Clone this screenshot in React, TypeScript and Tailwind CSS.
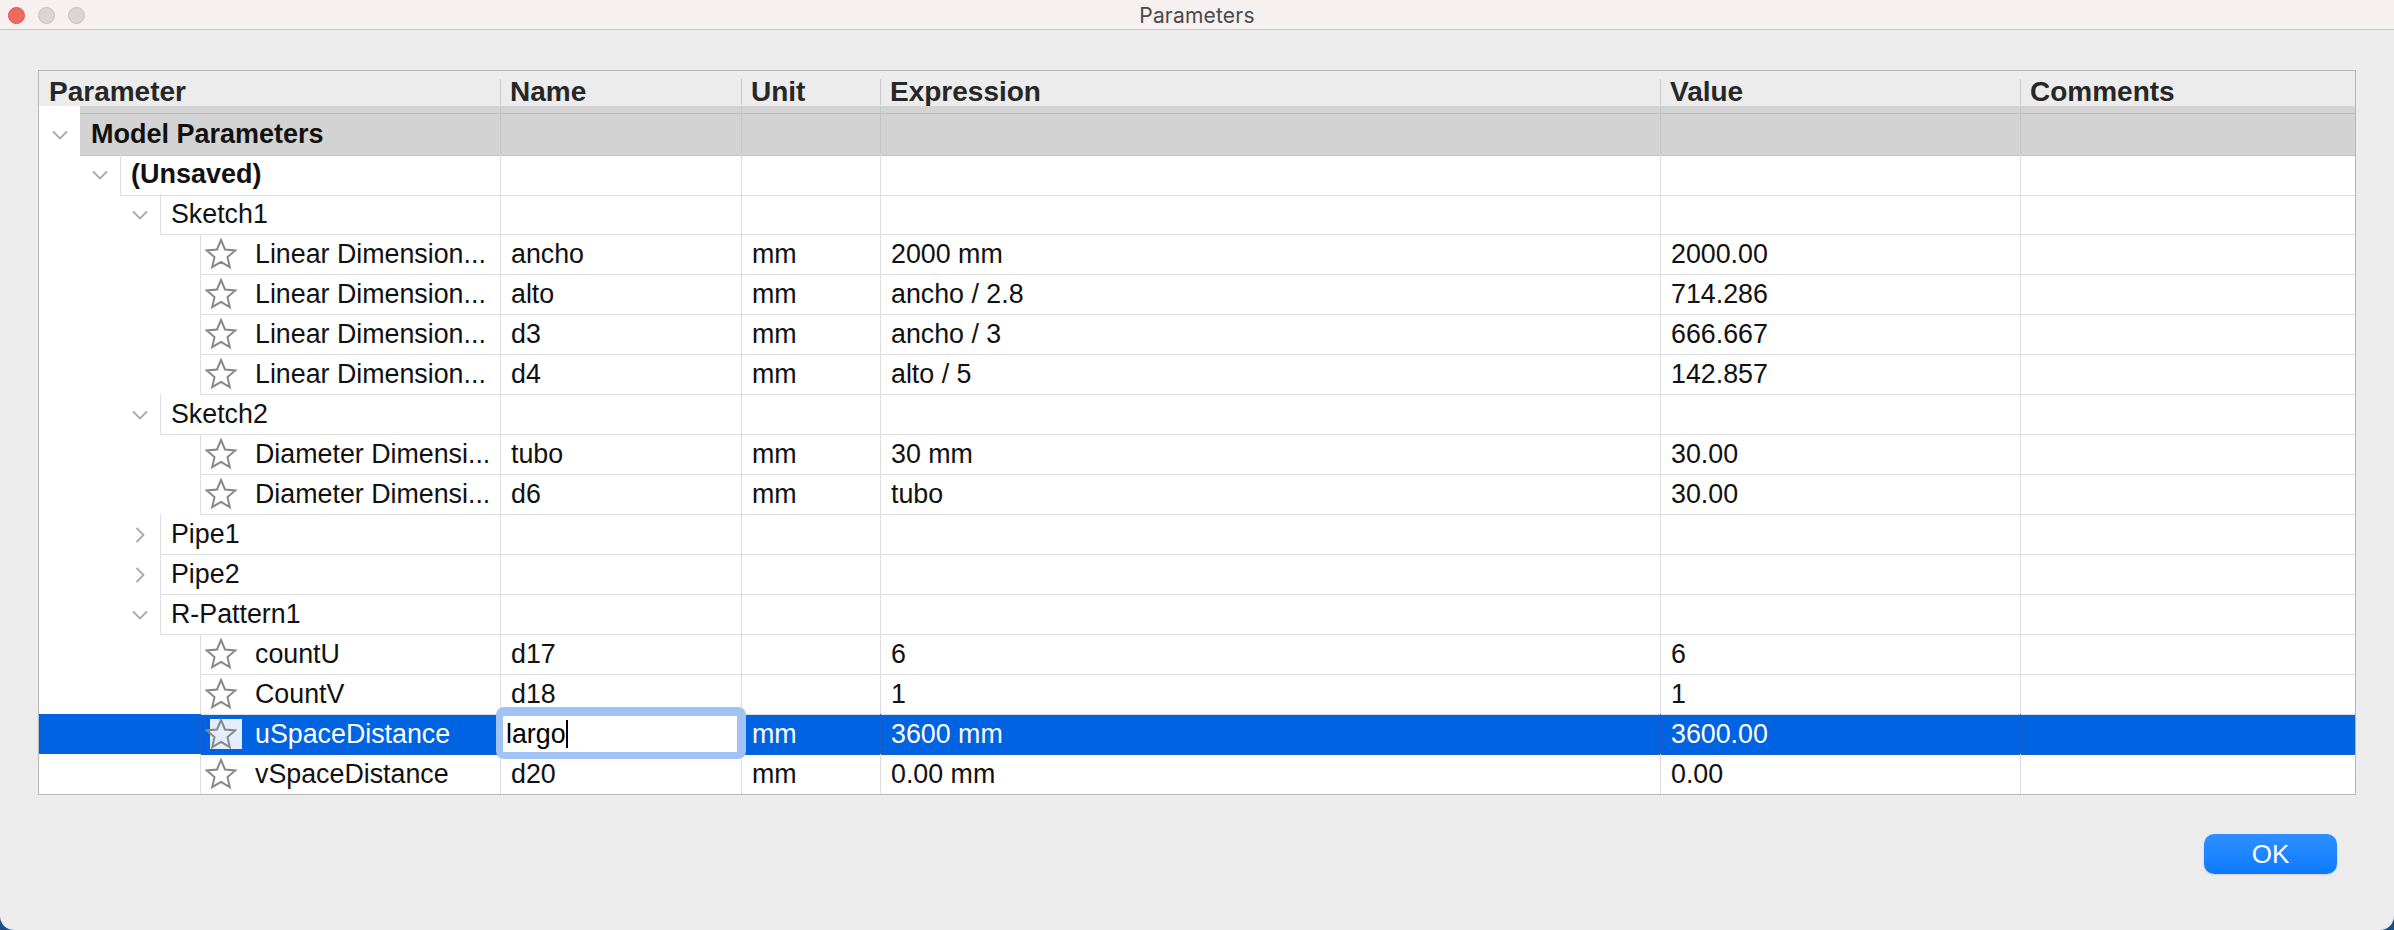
import React from 'react';

type Row = {
  level: 0 | 1 | 2 | 3;
  label: string;
  bold?: boolean;
  chev?: 'down' | 'right';
  gray?: boolean;
  name?: string;
  unit?: string;
  expr?: string;
  value?: string;
  selected?: boolean;
  last?: boolean;
};

const COLS = 'grid grid-cols-[461px_241px_139px_780px_360px_1fr]';

const spacerWidth: Record<number, string> = {
  0: 'w-[41px]',
  1: 'w-[81px]',
  2: 'w-[121px]',
  3: 'w-[161px]',
};

const rows: Row[] = [
  { level: 0, label: 'Model Parameters', bold: true, chev: 'down', gray: true },
  { level: 1, label: '(Unsaved)', bold: true, chev: 'down' },
  { level: 2, label: 'Sketch1', chev: 'down' },
  { level: 3, label: 'Linear Dimension...', name: 'ancho', unit: 'mm', expr: '2000 mm', value: '2000.00' },
  { level: 3, label: 'Linear Dimension...', name: 'alto', unit: 'mm', expr: 'ancho / 2.8', value: '714.286' },
  { level: 3, label: 'Linear Dimension...', name: 'd3', unit: 'mm', expr: 'ancho / 3', value: '666.667' },
  { level: 3, label: 'Linear Dimension...', name: 'd4', unit: 'mm', expr: 'alto / 5', value: '142.857' },
  { level: 2, label: 'Sketch2', chev: 'down' },
  { level: 3, label: 'Diameter Dimensi...', name: 'tubo', unit: 'mm', expr: '30 mm', value: '30.00' },
  { level: 3, label: 'Diameter Dimensi...', name: 'd6', unit: 'mm', expr: 'tubo', value: '30.00' },
  { level: 2, label: 'Pipe1', chev: 'right' },
  { level: 2, label: 'Pipe2', chev: 'right' },
  { level: 2, label: 'R-Pattern1', chev: 'down' },
  { level: 3, label: 'countU', name: 'd17', unit: '', expr: '6', value: '6' },
  { level: 3, label: 'CountV', name: 'd18', unit: '', expr: '1', value: '1' },
  { level: 3, label: 'uSpaceDistance', name: 'largo', unit: 'mm', expr: '3600 mm', value: '3600.00', selected: true },
  { level: 3, label: 'vSpaceDistance', name: 'd20', unit: 'mm', expr: '0.00 mm', value: '0.00', last: true },
];

function Chevron({ dir }: { dir: 'down' | 'right' }) {
  if (dir === 'right') {
    return (
      <svg width="10" height="16" viewBox="0 0 10 16">
        <path d="M1.5 1 L8.5 8 L1.5 15" fill="none" stroke="#a9a9a9" strokeWidth="1.8" />
      </svg>
    );
  }
  return (
    <svg width="16" height="10" viewBox="0 0 16 10">
      <path d="M1 1.5 L8 8.5 L15 1.5" fill="none" stroke="#a9a9a9" strokeWidth="1.8" />
    </svg>
  );
}

function StarIcon() {
  return (
    <svg width="32" height="32" viewBox="0 0 32 32" className="relative">
      <polygon
        points="16,2 20,11.5 30.3,12.4 22.5,19.1 24.8,29.1 16,23.8 7.2,29.1 9.5,19.1 1.7,12.4 12,11.5"
        fill="none"
        stroke="#888888"
        strokeWidth="2"
        strokeLinejoin="miter"
      />
    </svg>
  );
}

function TableRow({ r }: { r: Row }) {
  const sel = !!r.selected;
  const line = r.gray ? 'border-[#c3c3c3]' : sel ? 'border-[#1a5fcc]' : 'border-[#dedede]';
  const bottom = r.last ? '' : 'border-b';
  const cell = `flex items-center pl-[10px] border-l ${bottom} ${line} ${r.gray ? 'bg-[#d3d3d3]' : ''}`;

  return (
    <div className={`${COLS} h-[40px] ${sel ? 'bg-[#0063e1] text-white' : 'text-[#111]'}`}>
      <div className="flex">
        <div className={`${spacerWidth[r.level]} flex justify-end`}>
          {r.chev && (
            <div className="w-[40px] flex items-center justify-center">
              <Chevron dir={r.chev} />
            </div>
          )}
        </div>
        <div
          className={`flex-1 flex items-center ${bottom} ${line} ${
            r.gray ? 'bg-[#d3d3d3] pl-[11px]' : 'border-l'
          } ${r.level === 3 ? 'pl-[4px]' : 'pl-[10px]'} ${r.bold ? 'font-bold text-[27px]' : ''}`}
        >
          {r.level === 3 && (
            <div className="relative w-[32px] h-[32px] mr-[18px]">
              {sel && <div className="absolute left-[5px] top-[1px] w-[32px] h-[30px] bg-[#e3edfb]" />}
              <StarIcon />
            </div>
          )}
          <span className="whitespace-nowrap">{r.label}</span>
        </div>
      </div>
      {sel ? (
        <div className={`relative border-l ${bottom} ${line}`}>
          <div className="absolute -left-[5px] -right-[5px] -top-[7px] -bottom-[5px] z-10 rounded-[8px] bg-[#a0c3f4] pl-[7px] pr-[9px] pt-[9px] pb-[7px]">
            <div className="h-full bg-white flex items-center pl-[3px] text-black">
              <span>largo</span>
              <span className="w-[2px] h-[28px] bg-black" />
            </div>
          </div>
        </div>
      ) : (
        <div className={cell}>{r.name}</div>
      )}
      <div className={cell}>{r.unit}</div>
      <div className={cell}>{r.expr}</div>
      <div className={cell}>{r.value}</div>
      <div className={cell}></div>
    </div>
  );
}

export default function App() {
  const headers = ['Name', 'Unit', 'Expression', 'Value', 'Comments'];
  return (
    <div className="w-[2394px] h-[930px] bg-[#1f4d86]">
      <div className="h-full flex flex-col bg-[#ececec] rounded-b-[14px] overflow-hidden font-['Liberation_Sans',Arial,sans-serif] text-[26.8px]">
        {/* title bar */}
        <div className="h-[30px] shrink-0 bg-[#f6f0f0] border-b border-[#cdc8c8]">
          <div className="h-[21px] grid grid-cols-[1fr_auto_1fr] items-center">
            <div className="flex items-center gap-[13px] pl-[8px]">
              <span className="w-[17px] h-[17px] rounded-full bg-[#ee6a5e] border border-[#d9574c]" />
              <span className="w-[17px] h-[17px] rounded-full bg-[#d9d5d5] border border-[#c6c2c2]" />
              <span className="w-[17px] h-[17px] rounded-full bg-[#d9d5d5] border border-[#c6c2c2]" />
            </div>
            <div className="font-['Inter',sans-serif] text-[21px] tracking-[0.2px] text-[#4b4848]">Parameters</div>
            <div />
          </div>
        </div>

        {/* table */}
        <div className="ml-[38px] mt-[40px] w-[2318px] border border-[#b7b7b7] bg-white">
          <div className={`${COLS} h-[35px] pb-[3px] bg-[#ececec] font-bold text-[28px] text-[#272727]`}>
            <div className="flex items-center pl-[10px]">Parameter</div>
            {headers.map((h) => (
              <div key={h} className="flex items-center">
                <span className="h-[26px] border-l border-[#c8c8c8]" />
                <span className="pl-[9px]">{h}</span>
              </div>
            ))}
          </div>
          <div className={`${COLS} h-[8px]`}>
            <div className="flex">
              <div className="w-[41px]" />
              <div className="flex-1 bg-[#d3d3d3] border-b border-[#bdbdbd]" />
            </div>
            {headers.map((h) => (
              <div key={h} className="bg-[#d3d3d3] border-l border-b border-l-[#c6c6c6] border-b-[#bdbdbd]" />
            ))}
          </div>
          {rows.map((r, i) => (
            <TableRow key={i} r={r} />
          ))}
        </div>

        {/* footer */}
        <div className="flex justify-end pr-[57px] mt-[39px]">
          <button className="w-[133px] h-[40px] rounded-[10px] bg-gradient-to-b from-[#2d90ff] to-[#0a7aff] text-white text-[26px] shadow-[0_1px_2px_rgba(0,0,0,0.12)]">
            OK
          </button>
        </div>
      </div>
    </div>
  );
}
